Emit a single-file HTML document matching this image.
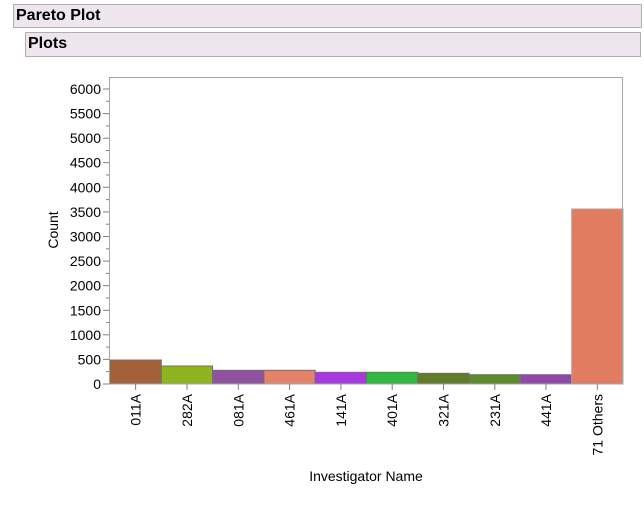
<!DOCTYPE html>
<html><head><meta charset="utf-8"><style>
body{margin:0;width:644px;height:525px;background:#fff;overflow:hidden;font-family:"Liberation Sans",sans-serif;}
.h{position:absolute;background:#ede7ed;border:1px solid #b4aab4;font-weight:bold;font-size:16px;color:#000;box-sizing:border-box;padding-left:2px;line-height:22px;}
</style></head><body>
<div class="h" style="left:13px;top:4px;width:629px;height:24px;">Pareto Plot</div>
<div class="h" style="left:25px;top:32px;width:616px;height:25px;">Plots</div>
<svg width="644" height="525" style="position:absolute;left:0;top:0" font-family="Liberation Sans, sans-serif" font-size="14">
<g id="bars" stroke="#707070" stroke-width="1">
<rect x="110" y="360" width="51.3" height="24" fill="#a5603a"/>
<rect x="161.3" y="366" width="51.3" height="18" fill="#8fb420"/>
<rect x="212.6" y="370.3" width="51.3" height="13.7" fill="#9052a0"/>
<rect x="263.9" y="370.3" width="51.3" height="13.7" fill="#e4826a"/>
<rect x="315.2" y="372.3" width="51.3" height="11.7" fill="#a838e0"/>
<rect x="366.5" y="372.3" width="51.3" height="11.7" fill="#30b840"/>
<rect x="417.8" y="373.3" width="51.3" height="10.7" fill="#607c28"/>
<rect x="469.1" y="374.7" width="51.3" height="9.3" fill="#5c8a2c"/>
<rect x="520.4" y="374.7" width="51.3" height="9.3" fill="#9248a8"/>
<rect x="571.7" y="209" width="51.3" height="175" fill="#e27c60" stroke="#b0a0a0"/>
</g>
<rect x="109.5" y="77.5" width="513" height="306.5" fill="none" stroke="#a0a8a0"/>
<g stroke="#808080">
<line x1="103" y1="89" x2="109" y2="89"/><line x1="103" y1="113.6" x2="109" y2="113.6"/><line x1="103" y1="138.2" x2="109" y2="138.2"/><line x1="103" y1="162.7" x2="109" y2="162.7"/><line x1="103" y1="187.3" x2="109" y2="187.3"/><line x1="103" y1="211.9" x2="109" y2="211.9"/><line x1="103" y1="236.5" x2="109" y2="236.5"/><line x1="103" y1="261.1" x2="109" y2="261.1"/><line x1="103" y1="285.7" x2="109" y2="285.7"/><line x1="103" y1="310.3" x2="109" y2="310.3"/><line x1="103" y1="334.8" x2="109" y2="334.8"/><line x1="103" y1="359.4" x2="109" y2="359.4"/><line x1="103" y1="384" x2="109" y2="384"/>
<line x1="106" y1="101.3" x2="109" y2="101.3"/><line x1="106" y1="125.9" x2="109" y2="125.9"/><line x1="106" y1="150.5" x2="109" y2="150.5"/><line x1="106" y1="175" x2="109" y2="175"/><line x1="106" y1="199.6" x2="109" y2="199.6"/><line x1="106" y1="224.2" x2="109" y2="224.2"/><line x1="106" y1="248.8" x2="109" y2="248.8"/><line x1="106" y1="273.4" x2="109" y2="273.4"/><line x1="106" y1="298" x2="109" y2="298"/><line x1="106" y1="322.6" x2="109" y2="322.6"/><line x1="106" y1="347.1" x2="109" y2="347.1"/><line x1="106" y1="371.7" x2="109" y2="371.7"/>
<line x1="135.6" y1="384" x2="135.6" y2="390"/><line x1="187" y1="384" x2="187" y2="390"/><line x1="238.3" y1="384" x2="238.3" y2="390"/><line x1="289.6" y1="384" x2="289.6" y2="390"/><line x1="340.9" y1="384" x2="340.9" y2="390"/><line x1="392.2" y1="384" x2="392.2" y2="390"/><line x1="443.5" y1="384" x2="443.5" y2="390"/><line x1="494.8" y1="384" x2="494.8" y2="390"/><line x1="546" y1="384" x2="546" y2="390"/><line x1="597.3" y1="384" x2="597.3" y2="390"/>
</g>
<g text-anchor="end" fill="#000">
<text x="101" y="94">6000</text><text x="101" y="118.6">5500</text><text x="101" y="143.2">5000</text><text x="101" y="167.7">4500</text><text x="101" y="192.3">4000</text><text x="101" y="216.9">3500</text><text x="101" y="241.5">3000</text><text x="101" y="266.1">2500</text><text x="101" y="290.7">2000</text><text x="101" y="315.3">1500</text><text x="101" y="339.8">1000</text><text x="101" y="364.4">500</text><text x="101" y="389">0</text>
</g>
<g text-anchor="end">
<text transform="translate(140.6,394) rotate(-90)">011A</text>
<text transform="translate(192,394) rotate(-90)">282A</text>
<text transform="translate(243.3,394) rotate(-90)">081A</text>
<text transform="translate(294.6,394) rotate(-90)">461A</text>
<text transform="translate(345.9,394) rotate(-90)">141A</text>
<text transform="translate(397.2,394) rotate(-90)">401A</text>
<text transform="translate(448.5,394) rotate(-90)">321A</text>
<text transform="translate(499.8,394) rotate(-90)">231A</text>
<text transform="translate(551,394) rotate(-90)">441A</text>
<text transform="translate(602.3,394) rotate(-90)">71 Others</text>
</g>
<text transform="translate(58,230) rotate(-90)" text-anchor="middle">Count</text>
<text x="366" y="481" text-anchor="middle">Investigator Name</text>
</svg>
</body></html>
